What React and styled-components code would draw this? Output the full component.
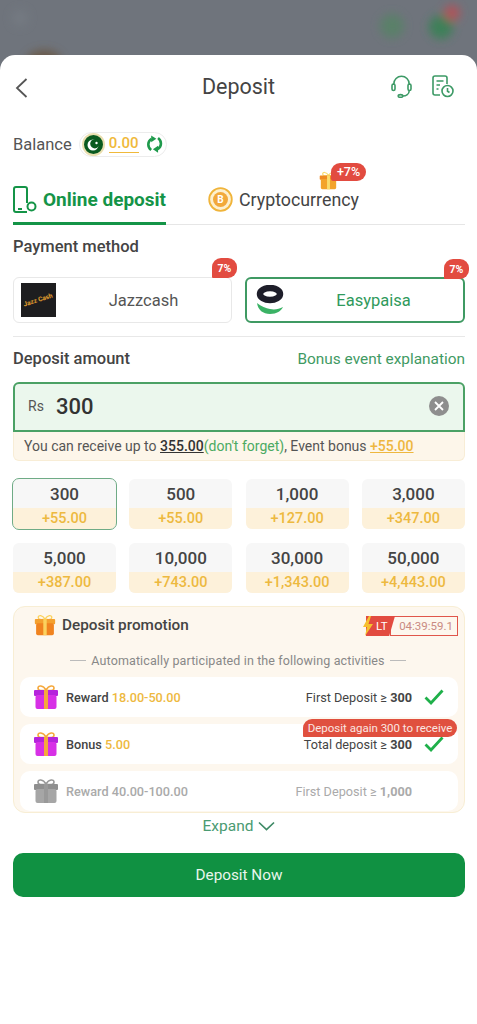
import React from "react";
import styled, { createGlobalStyle } from "styled-components";

const Global = createGlobalStyle`
  html, body { margin: 0; padding: 0; background: #fff; }
  body { font-family: Roboto, "Liberation Sans", sans-serif; color: #444; }
  * { box-sizing: border-box; }
`;
const Page = styled.div`width: 477px; height: 1024px; overflow: hidden; background: #fff; display: flex; flex-direction: column;`;
const Backdrop = styled.div`height: 70px; margin-bottom: -15px; background: #6f747c; flex: none;`;
const BackdropArt = styled.svg`display: block; width: 477px; height: 70px;`;
const Sheet = styled.main`position: relative; flex: 1; background: #fff; border-radius: 15px 15px 0 0; padding: 0 12px 0 13px; display: flex; flex-direction: column;`;
const Header = styled.header`height: 64px; display: grid; grid-template-columns: 1fr auto 1fr; align-items: center;`;
const BackBtn = styled.div`display: flex; align-items: center; margin: 2px 0 0 2px;`;
const Title = styled.h1`margin: 0 0 0 -1px; font-size: 21.500px; font-weight: 400; color: #444; line-height: 1;`;
const HeaderIcons = styled.div`display: flex; gap: 20px; align-items: center; justify-content: flex-end; margin-right: 11px; margin-bottom: 1px;`;
const BalanceRow = styled.div`height: 26px; margin-top: 12px; display: flex; align-items: center; gap: 7px; font-size: 16.500px; color: #555;`;
const Pill = styled.div`width: 88px; height: 25px; border: 1px solid #ececec; border-radius: 13px; display: flex; align-items: center; padding: 0 3px 0 2px; gap: 4px;`;
const Coin = styled.span`width: 23px; height: 23px; border-radius: 50%; background: #0a5a1f; border: 2px solid #eadfb0; display: flex; align-items: center; justify-content: center; flex: none;`;
const Amount = styled.span`font-size: 15px; font-weight: 500; color: #f0b93a; border-bottom: 1px solid #f0b93a; line-height: 17px;`;
const Tabs = styled.nav`margin-top: 23px; height: 45px; display: flex; gap: 42px; border-bottom: 1px solid #e6e6e6;`;
const Tab = styled.div`
  position: relative; display: flex; align-items: center; gap: 6px; height: 45px;
  padding-bottom: ${p => p.$active ? "4px" : "7px"};
  font-size: ${p => p.$active ? "19px" : "17.800px"}; font-weight: ${p => p.$active ? 700 : 400};
  color: ${p => p.$active ? "#149447" : "#444"};
  border-bottom: ${p => p.$active ? "3px solid #149447" : "none"};
`;
const GiftBadge = styled.div`position: absolute; left: 111px; top: -9px; display: flex; align-items: center;`;
const PlusBadge = styled.span`margin-left: -7px; height: 18px; width: 35px; background: #e24b40; border-radius: 9px 9px 9px 2px; color: #fff; font-size: 12.500px; font-weight: 500; display: flex; align-items: center; justify-content: center; margin-top: -18px;`;
const SectionTitle = styled.h2`margin: 12px 0 0; font-size: 16.500px; font-weight: 500; line-height: 19px; color: #444;`;
const Methods = styled.div`margin-top: 21px; display: grid; grid-template-columns: 219px 220px; gap: 13px; padding-bottom: 13px; border-bottom: 1px solid #e8e8e8;`;
const Method = styled.div`
  position: relative; height: 46px; border-radius: 6px; padding: 0 0 0 7px;
  border: ${p => p.$active ? "2px solid #3f9a63" : "1px solid #e8e8e8"};
  display: flex; align-items: center; font-size: 16.500px;
  color: ${p => p.$active ? "#2f9a5c" : "#555"};
`;
const MethodName = styled.span`flex: 1; text-align: center;`;
const Jazz = styled.div`width: 35px; height: 34px; background: #1d1d1f; display: flex; align-items: center; justify-content: center; flex: none;`;
const JazzText = styled.span`font-size: 6.500px; font-weight: 700; color: #e4a12e; transform: rotate(-18deg); white-space: nowrap;`;
const Percent = styled.span`position: absolute; right: -6px; top: -20px; width: 25px; height: 20px; background: #e24b40; border-radius: 9px 9px 9px 1px; color: #fff; font-size: 10.500px; font-weight: 700; display: flex; align-items: center; justify-content: center;`;
const AmountHead = styled.div`margin-top: 12px; height: 19px; display: flex; justify-content: space-between; align-items: center;`;
const Explain = styled.span`font-size: 15.400px; color: #3f9a63;`;
const AmountTitle = styled(SectionTitle)`margin: 0;`;
const InputBox = styled.div`margin-top: 14px; height: 50px; background: #ebf7ed; border: 2px solid #4ba165; border-radius: 6px 6px 0 0; display: flex; align-items: center; padding: 0 14px 2px 13px;`;
const Rs = styled.span`font-size: 14px; color: #555; width: 28px;`;
const InputValue = styled.span`flex: 1; font-size: 22px; font-weight: 500; color: #333;`;
const Clear = styled.span`width: 20px; height: 20px; background: #8e8e8e; border-radius: 50%; display: flex; align-items: center; justify-content: center;`;
const Hint = styled.div`height: 29px; background: #fdf6ea; border: 1px solid #f8edd6; border-top: none; border-radius: 0 0 6px 6px; padding: 0 10px; display: flex; align-items: center; font-size: 14px; color: #555; white-space: pre;`;
const Strong = styled.span`font-weight: 500; color: #333; text-decoration: underline;`;
const Forget = styled.span`color: #4caa62;`;
const Gold = styled.span`font-weight: 500; color: #eeb73f; text-decoration: underline;`;
const Grid = styled.div`margin-top: 18px; display: grid; grid-template-columns: repeat(4, 103px); column-gap: 13.300px; row-gap: 14px;`;
const Chip = styled.div`height: 50px; border-radius: 6px; overflow: hidden; display: flex; flex-direction: column; background: #f7f7f7; outline: ${p => p.$active ? "1px solid #6fab86" : "none"};`;
const ChipTop = styled.div`height: 29px; display: flex; align-items: center; justify-content: center; font-size: 17px; font-weight: 500; color: #444;`;
const ChipBottom = styled.div`flex: 1; background: #fdf1da; display: flex; align-items: center; justify-content: center; font-size: 14.500px; font-weight: 500; color: #edb93f;`;
const Promo = styled.section`margin-top: 13px; height: 207px; background: #fdf7ee; border: 1px solid #f8eed4; border-radius: 12px; padding: 0 6px; display: flex; flex-direction: column;`;
const PromoHead = styled.div`height: 34px; display: flex; align-items: center; justify-content: space-between; padding: 1px 0 0 14px;`;
const PromoTitle = styled.div`display: flex; align-items: center; gap: 6px; font-size: 15.300px; font-weight: 500; color: #444;`;
const Timer = styled.div`position: relative; display: flex; align-items: stretch; height: 20px; margin-top: 3px;`;
const TimerTag = styled.span`width: 29px; margin-right: -5px; background: #e24b40; clip-path: polygon(0 0, 100% 0, 80% 100%, 0 100%); color: #fff; font-size: 11.500px; display: flex; align-items: center; padding-left: 10px; z-index: 1;`;
const TimerVal = styled.span`width: 68px; border: 1px solid #e0564b; font-size: 11.500px; color: #c98a82; display: flex; align-items: center; justify-content: flex-end; padding-right: 4px; white-space: nowrap;`;
const Bolt = styled.svg`position: absolute; left: -3px; top: 0; z-index: 2;`;
const AutoLine = styled.div`height: 19px; margin-top: 10px; display: flex; align-items: center; justify-content: center; gap: 5px; font-size: 12.500px; color: #888; letter-spacing: .12px; padding-right: 2px;`;
const Dash = styled.span`width: 16px; height: 1px; background: #bbb;`;
const Rows = styled.div`margin-top: 7px; display: flex; flex-direction: column; gap: 7px;`;
const Row = styled.div`position: relative; height: 40px; background: #fff; border-radius: 10px; display: flex; align-items: center; padding: 0 14px 0 13px; font-size: 12.700px; color: ${p => p.$off ? "#aaa" : "#444"};`;
const RowLabel = styled.span`margin-left: 7px; font-weight: 500; flex: 1;`;
const GoldVal = styled.span`color: #eeb93f;`;
const RowRule = styled.span``;
const RuleVal = styled.b`font-weight: 700;`;
const CheckSlot = styled.span`width: 20px; margin-left: 12px; display: flex; align-items: center; height: 20px;`;
const Tip = styled.span`position: absolute; right: 1px; top: -5px; height: 18px; width: 154px; background: #e0503f; color: #fbe6e2; border-radius: 9px 9px 9px 1px; font-size: 11.500px; white-space: nowrap; display: flex; align-items: center; justify-content: center; z-index: 2;`;
const Expand = styled.div`height: 25px; display: flex; align-items: center; justify-content: center; gap: 5px; font-size: 15.500px; color: #4a9b72;`;
const Cta = styled.button`margin-top: 15px; height: 44px; width: 452px; border: 0; border-radius: 10px; background: #109142; color: #e9f6ec; font: 400 15.300px Roboto, sans-serif;`;

const Gift = ({ body = "#d730e6", side = "#b524dc", ribbon = "#f5a83c", size = 26 }) => (
  <svg width={size} height={size} viewBox="0 0 26 26" style={{ flex: "none" }}>
    <path d="M13 6C10 1 5 1 5 4s4 3 8 2c4 1 8 1 8-2s-5-3-8 2z" fill="none" stroke={ribbon} strokeWidth="1.600" />
    <rect x="1" y="6" width="24" height="6" rx="1" fill={side} />
    <rect x="2.500" y="11" width="21" height="14" rx="2" fill={body} />
    <rect x="11" y="6" width="4" height="19" fill={ribbon} />
  </svg>
);

const Check = () => (
  <svg width="20" height="16" viewBox="0 0 20 16"><path d="M1.500 8.500 7 14 18.500 1.500" fill="none" stroke="#1fb04a" strokeWidth="2.800" /></svg>
);

const amounts = [
  ["300", "+55.00", true], ["500", "+55.00"], ["1,000", "+127.00"], ["3,000", "+347.00"],
  ["5,000", "+387.00"], ["10,000", "+743.00"], ["30,000", "+1,343.00"], ["50,000", "+4,443.00"],
];

export default function App() {
  return (
    <Page>
      <Global />
      <Backdrop>
        <BackdropArt viewBox="0 0 477 70">
          <defs><filter id="b" x="-50%" y="-50%" width="200%" height="200%"><feGaussianBlur stdDeviation="5" /></filter></defs>
          <g filter="url(#b)">
            <circle cx="392" cy="26" r="12" fill="#5a8069" />
            <circle cx="441" cy="27" r="12" fill="#3c8058" />
            <circle cx="452" cy="13" r="8" fill="#b0525a" />
            <ellipse cx="44" cy="60" rx="17" ry="10" fill="#6a5a48" />
            <circle cx="20" cy="18" r="8" fill="#757a82" />
          </g>
        </BackdropArt>
      </Backdrop>
      <Sheet>
        <Header>
          <BackBtn>
            <svg width="13" height="20" viewBox="0 0 13 20"><path d="M11.500 1 2 10l9.500 9" fill="none" stroke="#555" strokeWidth="1.800" /></svg>
          </BackBtn>
          <Title>Deposit</Title>
          <HeaderIcons>
            <svg width="21" height="23" viewBox="0 0 21 23" fill="none" stroke="#3d9a66" strokeWidth="1.600">
              <path d="M2.800 10V9a7.700 7.700 0 0 1 15.400 0v1" />
              <rect x="1" y="9" width="3" height="6.500" rx="1.500" />
              <rect x="17" y="9" width="3" height="6.500" rx="1.500" />
              <path d="M18.200 15.500c0 3.500-3 5.500-6.500 5.500" />
              <ellipse cx="9.500" cy="21" rx="2.300" ry="1.400" />
            </svg>
            <svg width="22" height="23" viewBox="0 0 22 23" fill="none" stroke="#3d9a66" strokeWidth="1.600">
              <path d="M8 20H3a2 2 0 0 1-2-2V3a2 2 0 0 1 2-2h10a2 2 0 0 1 2 2v6" />
              <path d="M4.500 6h7M4.500 10h3.500M4.500 14h2" />
              <circle cx="15.500" cy="16" r="5.500" />
              <path d="M15.500 13v3.200l2 1.300" />
            </svg>
          </HeaderIcons>
        </Header>
        <BalanceRow>
          Balance
          <Pill>
            <Coin>
              <svg width="15" height="15" viewBox="0 0 15 15">
                <circle cx="7" cy="8" r="5.500" fill="#fff" />
                <circle cx="8.800" cy="6.800" r="4.600" fill="#0a5a1f" />
                <circle cx="10.500" cy="6" r="1.200" fill="#fff" />
              </svg>
            </Coin>
            <Amount>0.00</Amount>
            <svg width="20" height="20" viewBox="0 0 20 20" style={{ marginLeft: 3 }} fill="none" stroke="#1f9a4c" strokeWidth="3">
              <path d="M6 17C1.500 13.500 1.500 7 6.500 4" />
              <path d="M14 3c4.500 3.500 4.500 10-.5 13" />
              <path d="M6 0v8l6-4z" fill="#1f9a4c" strokeWidth="0" />
              <path d="M14 20v-8l-6 4z" fill="#1f9a4c" strokeWidth="0" />
            </svg>
          </Pill>
        </BalanceRow>
        <Tabs>
          <Tab $active>
            <svg width="24" height="27" viewBox="0 0 24 27" fill="none" stroke="#149447" strokeWidth="2">
              <path d="M14 26H3a2 2 0 0 1-2-2V3a2 2 0 0 1 2-2h9a2 2 0 0 1 2 2v14" />
              <path d="M5 23h4" />
              <circle cx="18.500" cy="20.500" r="4" />
            </svg>
            Online deposit
          </Tab>
          <Tab>
            <svg width="25" height="25" viewBox="0 0 25 25">
              <circle cx="12.500" cy="12.500" r="11.300" fill="#fdf0cf" stroke="#f0b43a" strokeWidth="1.800" />
              <circle cx="12.500" cy="12.500" r="7.500" fill="#f2a93b" />
              <text x="12.500" y="16" textAnchor="middle" fontSize="10" fontWeight="700" fill="#fff" fontFamily="Roboto">B</text>
            </svg>
            Cryptocurrency
            <GiftBadge>
              <Gift body="#f3a32b" side="#ee8a22" ribbon="#f9dc6d" size={19} />
              <PlusBadge>+7%</PlusBadge>
            </GiftBadge>
          </Tab>
        </Tabs>
        <SectionTitle>Payment method</SectionTitle>
        <Methods>
          <Method>
            <Jazz><JazzText>Jazz Cash</JazzText></Jazz>
            <MethodName>Jazzcash</MethodName>
            <Percent>7%</Percent>
          </Method>
          <Method $active>
            <svg width="28" height="30" viewBox="0 0 28 30" style={{ flex: "none", marginLeft: 2 }}>
              <ellipse cx="14" cy="9" rx="10" ry="6" fill="none" stroke="#1e1e2a" strokeWidth="6.500" />
              <path d="M1 18c1 7 6 11 13 11s11-3 13-7c-4 2-8 3-13 2-4-.5-9-3-13-6z" fill="#3bb265" />
            </svg>
            <MethodName>Easypaisa</MethodName>
            <Percent>7%</Percent>
          </Method>
        </Methods>
        <AmountHead>
          <AmountTitle>Deposit amount</AmountTitle>
          <Explain>Bonus event explanation</Explain>
        </AmountHead>
        <InputBox>
          <Rs>Rs</Rs>
          <InputValue>300</InputValue>
          <Clear>
            <svg width="10" height="10" viewBox="0 0 10 10"><path d="M1 1l8 8M9 1 1 9" stroke="#fff" strokeWidth="1.800" /></svg>
          </Clear>
        </InputBox>
        <Hint>You can receive up to <Strong>355.00</Strong><Forget>(don't forget)</Forget>, Event bonus <Gold>+55.00</Gold></Hint>
        <Grid>
          {amounts.map(([v, b, a]) => (
            <Chip key={v} $active={a}>
              <ChipTop>{v}</ChipTop>
              <ChipBottom>{b}</ChipBottom>
            </Chip>
          ))}
        </Grid>
        <Promo>
          <PromoHead>
            <PromoTitle>
              <Gift body="#f0831f" side="#f4a12f" ribbon="#fbd25e" size={22} />
              Deposit promotion
            </PromoTitle>
            <Timer>
              <Bolt width="10" height="20" viewBox="0 0 10 20"><path d="M6 0 0 11h4l-2 9 8-12H5.500L8 0z" fill="#f6c02e" /></Bolt>
              <TimerTag>LT</TimerTag>
              <TimerVal>04:39:59.1</TimerVal>
            </Timer>
          </PromoHead>
          <AutoLine><Dash />Automatically participated in the following activities<Dash /></AutoLine>
          <Rows>
            <Row>
              <Gift />
              <RowLabel>Reward <GoldVal>18.00-50.00</GoldVal></RowLabel>
              <RowRule>First Deposit ≥ <RuleVal>300</RuleVal></RowRule>
              <CheckSlot><Check /></CheckSlot>
            </Row>
            <Row>
              <Gift />
              <RowLabel>Bonus <GoldVal>5.00</GoldVal></RowLabel>
              <RowRule>Total deposit ≥ <RuleVal>300</RuleVal></RowRule>
              <CheckSlot><Check /></CheckSlot>
              <Tip>Deposit again 300 to receive</Tip>
            </Row>
            <Row $off>
              <Gift body="#a6a6a6" side="#8f8f8f" ribbon="#999" />
              <RowLabel>Reward 40.00-100.00</RowLabel>
              <RowRule>First Deposit ≥ <RuleVal>1,000</RuleVal></RowRule>
              <CheckSlot />
            </Row>
          </Rows>
        </Promo>
        <Expand>
          Expand
          <svg width="17" height="10" viewBox="0 0 17 10"><path d="M1 1.500 8.500 8.500l7.500-7" fill="none" stroke="#3f8a66" strokeWidth="1.700" /></svg>
        </Expand>
        <Cta>Deposit Now</Cta>
      </Sheet>
    </Page>
  );
}
